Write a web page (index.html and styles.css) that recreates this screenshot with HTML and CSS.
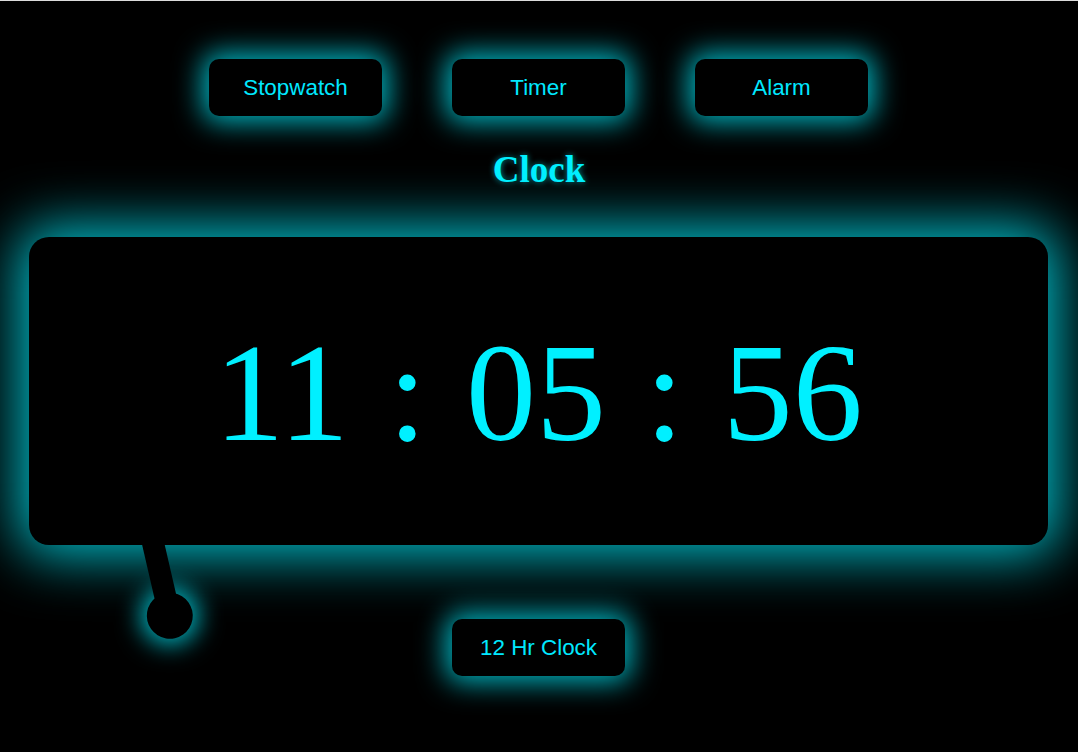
FILE: index.html
```html
<!DOCTYPE html>
<html lang="en">
<head>
<meta charset="utf-8">
<title>Clock</title>
<link rel="stylesheet" href="styles.css">
</head>
<body>
  <nav class="modes">
    <button class="btn">Stopwatch</button>
    <button class="btn">Timer</button>
    <button class="btn">Alarm</button>
  </nav>
  <h1 class="title">Clock</h1>
  <section class="clock">
    <div class="time">11 : 05 : 56</div>
    <div class="pendulum">
      <span class="bob"></span>
      <span class="rod"></span>
    </div>
  </section>
  <div class="actions">
    <button class="btn">12 Hr Clock</button>
  </div>
</body>
</html>
```
FILE: styles.css
```css
html, body {
  margin: 0;
  padding: 0;
  background: #000;
}
body {
  border-top: 1px solid #dcdcdc;
  height: 751px;
  overflow: hidden;
  font-family: "Liberation Sans", Arial, sans-serif;
  color: #00eeff;
}
.modes {
  display: flex;
  justify-content: center;
  gap: 70px;
  padding: 58px 1px 0 0;
}
.btn {
  width: 173px;
  height: 57px;
  border: none;
  border-radius: 10px;
  background: #000;
  color: #00e8ff;
  font-family: "Liberation Sans", Arial, sans-serif;
  font-size: 22.4px;
  display: flex;
  align-items: center;
  justify-content: center;
  padding: 0;
  box-shadow: 0 0 28px 6px rgba(0, 225, 240, 0.8);
}
.title {
  margin: 33px 0 46px;
  text-align: center;
  font-family: "Liberation Serif", "Times New Roman", serif;
  font-weight: bold;
  font-size: 37px;
  line-height: 42px;
  color: #00f0ff;
  text-shadow: 0 0 6px rgba(0, 240, 255, 0.6);
}
.clock {
  position: relative;
  margin: 0 30px 0 29px;
  height: 308px;
  border-radius: 20px;
  background: #000;
  box-shadow: 0 0 55px 10px rgba(0, 225, 240, 0.85);
  display: flex;
  align-items: center;
  justify-content: center;
}
.time {
  font-family: "Liberation Serif", "Times New Roman", serif;
  font-size: 140px;
  color: #00f0ff;
  white-space: pre;
  word-spacing: 4px;
  padding-top: 2px;
}
.pendulum {
  position: absolute;
  left: 110px;
  top: 293px;
  width: 22px;
  height: 88px;
  transform-origin: 50% 0;
  transform: rotate(-13deg);
}
.rod {
  position: absolute;
  left: 0;
  top: 0;
  width: 22px;
  height: 88px;
  background: #000;
}
.bob {
  position: absolute;
  left: -12px;
  bottom: -23px;
  width: 46px;
  height: 46px;
  border-radius: 50%;
  background: #000;
  box-shadow: 0 0 24px 6px rgba(0, 225, 240, 0.8);
}
.actions {
  display: flex;
  justify-content: center;
  margin-top: 74px;
  padding-right: 1px;
}
```
